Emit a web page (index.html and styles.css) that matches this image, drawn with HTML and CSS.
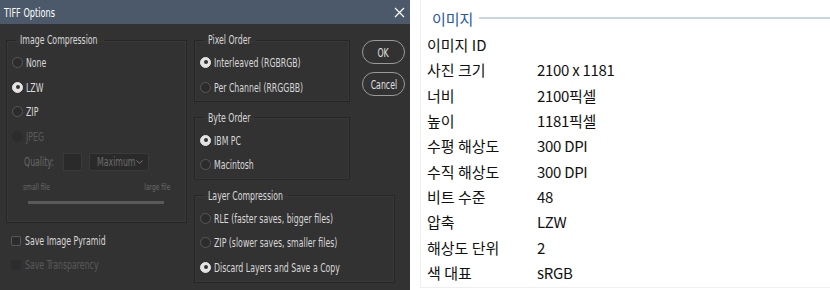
FILE: index.html
```html
<!DOCTYPE html>
<html lang="en">
<head>
  <meta charset="UTF-8">
  <title>TIFF Options</title>
  <link rel="stylesheet" href="styles.css">
</head>
<body>
  <div class="dialog">
    <div class="titlebar">
      <span class="t title">TIFF Options</span>
      <svg class="close" width="11" height="11" viewBox="0 0 11 11"><path d="M1 1 L10 10 M10 1 L1 10" stroke="#fff" stroke-width="1.2" fill="none"/></svg>
    </div>
    <div class="content">
      <div class="col left">
        <fieldset class="group compression">
          <legend class="lg-ic"><span class="t">Image Compression</span></legend>
          <div class="opt"><span class="radio"></span><span class="t">None</span></div>
          <div class="opt"><span class="radio on"></span><span class="t">LZW</span></div>
          <div class="opt"><span class="radio"></span><span class="t">ZIP</span></div>
          <div class="opt off"><span class="radio dim"></span><span class="t">JPEG</span></div>
          <div class="quality">
            <span class="qlabel"><span class="t">Quality:</span></span>
            <span class="qbox"></span>
            <span class="qselect">
              <span class="t qtext">Maximum</span>
              <svg class="caret" width="7" height="4" viewBox="0 0 7 4"><path d="M0.5 0.5 L3.5 3.3 L6.5 0.5" stroke="#7a7a7a" fill="none"/></svg>
            </span>
          </div>
          <div class="sizes"><span class="t">small file</span><span class="t tr">large file</span></div>
          <div class="slider"></div>
        </fieldset>
        <div class="check"><span class="box"></span><span class="t">Save Image Pyramid</span></div>
        <div class="check off"><span class="box dim"></span><span class="t">Save Transparency</span></div>
      </div>
      <div class="col mid">
        <fieldset class="group">
          <legend class="lg-po"><span class="t">Pixel Order</span></legend>
          <div class="opt"><span class="radio on"></span><span class="t">Interleaved (RGBRGB)</span></div>
          <div class="opt"><span class="radio"></span><span class="t">Per Channel (RRGGBB)</span></div>
        </fieldset>
        <fieldset class="group">
          <legend class="lg-bo"><span class="t">Byte Order</span></legend>
          <div class="opt"><span class="radio on"></span><span class="t">IBM PC</span></div>
          <div class="opt"><span class="radio"></span><span class="t">Macintosh</span></div>
        </fieldset>
        <fieldset class="group">
          <legend class="lg-lc"><span class="t">Layer Compression</span></legend>
          <div class="opt"><span class="radio"></span><span class="t">RLE (faster saves, bigger files)</span></div>
          <div class="opt"><span class="radio"></span><span class="t">ZIP (slower saves, smaller files)</span></div>
          <div class="opt"><span class="radio on"></span><span class="t">Discard Layers and Save a Copy</span></div>
        </fieldset>
      </div>
      <div class="col buttons">
        <button class="btn"><span class="t tc">OK</span></button>
        <button class="btn"><span class="t tc">Cancel</span></button>
      </div>
    </div>
  </div>

  <div class="info">
    <div class="info-box">
      <div class="info-head"><span>이미지</span><span class="rule"></span></div>
      <div class="row"><span class="key">이미지 ID</span><span class="val"></span></div>
      <div class="row"><span class="key">사진 크기</span><span class="val">2100 x 1181</span></div>
      <div class="row"><span class="key">너비</span><span class="val">2100픽셀</span></div>
      <div class="row"><span class="key">높이</span><span class="val">1181픽셀</span></div>
      <div class="row"><span class="key">수평 해상도</span><span class="val">300 DPI</span></div>
      <div class="row"><span class="key">수직 해상도</span><span class="val">300 DPI</span></div>
      <div class="row"><span class="key">비트 수준</span><span class="val">48</span></div>
      <div class="row"><span class="key">압축</span><span class="val">LZW</span></div>
      <div class="row"><span class="key">해상도 단위</span><span class="val">2</span></div>
      <div class="row"><span class="key">색 대표</span><span class="val">sRGB</span></div>
    </div>
  </div>
</body>
</html>
```

FILE: styles.css
```css
body{
  margin: 0;
  display: flex;
  width: 830px;
  height: 290px;
  overflow: hidden;
  background-color: #fff;
}

/* 窄字体 用缩放模拟 */
.t{
  display: inline-block;
  white-space: nowrap;
  transform: scaleX(0.7);
  transform-origin: 0 50%;
}

.t.tr{
  transform-origin: 100% 50%;
}

.t.tc{
  transform-origin: 50% 50%;
}

.dialog{
  width: 410px;
  height: 290px;
  flex-shrink: 0;
  background-color: #323232;
  color: #d8d8d8;
  font-family: "DejaVu Sans Condensed", sans-serif;
  font-size: 12.4px;
}

.titlebar{
  height: 24px;
  background-color: #4b596a;
  display: flex;
  align-items: center;
  justify-content: space-between;
  padding: 0 5px 0 4px;
  color: #fff;
}

.titlebar .title{
  font-size: 13px;
  transform: scaleX(0.7);
}

.content{
  display: flex;
  padding: 10px 0 0 6px;
}

.col{
  display: flex;
  flex-direction: column;
}

.left{
  width: 181px;
}

.mid{
  width: 156px;
  margin-left: 7px;
  gap: 9.5px;
}

.buttons{
  margin-left: 12px;
  padding-top: 6px;
  gap: 8px;
}

.group{
  margin: 0;
  padding: 4px 0 2px 5px;
  border: 1px solid #262626;
  box-shadow: inset 0 0 0 1px #383838;
}

.group legend{
  padding: 0 4px;
  margin-left: 4px;
  line-height: 12px;
  overflow: visible;
  white-space: nowrap;
}

.lg-ic{ width: 80px; }
.lg-po{ width: 44px; }
.lg-bo{ width: 42px; }
.lg-lc{ width: 76px; }

.compression{
  padding-bottom: 18px;
}

.opt{
  height: 24.7px;
  display: flex;
  align-items: center;
}

.opt.off, .check.off{
  color: #5a5a5a;
}

.radio{
  width: 9px;
  height: 9px;
  flex-shrink: 0;
  border-radius: 50%;
  border: 1px solid #585858;
  background-color: #2c2c2c;
  margin-right: 3px;
  position: relative;
}

.radio.on{
  background-color: #e4e4e4;
  border-color: #e4e4e4;
}

.radio.on::after{
  content: "";
  position: absolute;
  left: 2.5px;
  top: 2.5px;
  width: 4px;
  height: 4px;
  border-radius: 50%;
  background-color: #333;
}

.radio.dim{
  border-color: #2c2c2c;
  background-color: #2c2c2c;
}

.quality{
  display: flex;
  align-items: center;
  height: 26px;
  margin-left: 12px;
  color: #686868;
}

.qlabel{
  width: 39px;
}

.qbox{
  width: 17px;
  height: 16px;
  background-color: #2a2a2a;
  border: 1px solid #3a3a3a;
}

.qselect{
  width: 46px;
  height: 16px;
  background-color: #2a2a2a;
  border: 1px solid #3a3a3a;
  border-radius: 2px;
  margin-left: 7px;
  padding: 0 5px 0 7px;
  display: flex;
  align-items: center;
  justify-content: space-between;
  color: #6c6c6c;
}

.qselect .qtext{
  width: 36px;
}

.caret{
  flex-shrink: 0;
}

.sizes{
  display: flex;
  justify-content: space-between;
  margin: 6px 16px 0 11px;
  font-size: 9.5px;
  line-height: 11px;
  color: #686868;
}

.slider{
  height: 3px;
  background-color: #5a5a5a;
  margin: 9px 22px 0 16px;
}

.check{
  display: flex;
  align-items: center;
  height: 24px;
  margin-left: 5px;
}

.check:first-of-type{
  margin-top: 6px;
}

.box{
  width: 8px;
  height: 8px;
  border: 1px solid #585858;
  border-radius: 2px;
  background-color: #2c2c2c;
  margin-right: 4px;
}

.box.dim{
  border-color: #2c2c2c;
}

.btn{
  width: 43px;
  height: 24px;
  border: 1.5px solid #9a9a9a;
  border-radius: 12px;
  background-color: #323232;
  color: #e0e0e0;
  font-family: "DejaVu Sans Condensed", sans-serif;
  font-size: 12.4px;
  padding: 0;
  display: flex;
  align-items: center;
  justify-content: center;
}

.info{
  flex: 1;
  padding-left: 10px;
  font-family: "Noto Sans CJK KR", sans-serif;
  font-size: 15px;
  color: #111;
}

.info-box{
  height: 287px;
  border-left: 1px solid #efefef;
  border-bottom: 1px solid #efefef;
  padding-left: 6px;
}

.info-head{
  display: flex;
  align-items: center;
  height: 28px;
  padding-top: 4px;
  margin-left: 5px;
  color: #2458a8;
}

.info-head .rule{
  flex: 1;
  height: 2px;
  background-color: #c8d4ea;
  margin-left: 6px;
}

.row{
  display: flex;
  align-items: center;
  height: 25.3px;
}

.key{
  width: 110px;
}

.val{
  letter-spacing: -0.3px;
}
```
